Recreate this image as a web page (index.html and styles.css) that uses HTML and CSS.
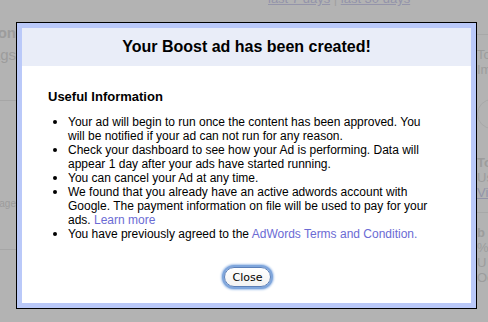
FILE: index.html
```html
<!DOCTYPE html>
<html lang="en">
<head>
   <meta charset="UTF-8">
   <title>Your Boost ad has been created!</title>
   <link rel="stylesheet" href="styles.css">
</head>
<body>
   <div class="page">
      <div class="page-top">
         <a href="#">last 7 days</a> | <a href="#">last 30 days</a>
      </div>
      <div class="page-cols">
         <div class="page-left">
            <p class="strong">Information</p>
            <p>Tags</p>
            <hr>
            <p class="small">Manage</p>
            <hr>
         </div>
         <div class="page-mid"></div>
         <div class="page-right">
            <hr>
            <p>Total</p>
            <p>Impr</p>
            <div class="ring"></div>
            <p class="strong">Tor</p>
            <p>Users</p>
            <p><a href="#">Views</a></p>
            <hr>
            <p class="strong">b</p>
            <p>%</p>
            <p>U</p>
            <p>Ocean,</p>
         </div>
      </div>
   </div>

   <div class="dialog">
      <div class="dialog-inner">
         <h1>Your Boost ad has been created!</h1>
         <div class="dialog-body">
            <h2>Useful Information</h2>
            <ul>
               <li>Your ad will begin to run once the content has been approved. You will be notified if your ad can not run for any reason.</li>
               <li>Check your dashboard to see how your Ad is performing. Data will appear 1 day after your ads have started running.</li>
               <li>You can cancel your Ad at any time.</li>
               <li>We found that you already have an active adwords account with Google. The payment information on file will be used to pay for your ads. <a href="#">Learn more</a></li>
               <li>You have previously agreed to the <a href="#">AdWords Terms and Condition.</a></li>
            </ul>
            <div class="actions">
               <button>Close</button>
            </div>
         </div>
      </div>
   </div>
</body>
</html>
```

FILE: styles.css
```css
* {
   margin: 0;
   padding: 0;
   box-sizing: border-box;
}
body {
   font-family: "Liberation Sans", Arial, sans-serif;
   background-color: #b3b3b3;
   width: 488px;
   height: 322px;
   overflow: hidden;
}
/* faded page behind the overlay */
.page {
   height: 322px;
   overflow: hidden;
   color: #9c9c9c;
   font-size: 13px;
}
.page a {
   color: #9393a8;
}
.page-top {
   height: 6px;
   padding-left: 268px;
   line-height: 13px;
   margin-top: -8px;
   color: #a0a0a0;
}
.page-top a {
   color: #9494aa;
}
.page-cols {
   display: flex;
   margin-top: 24px;
}
.page-left {
   width: 16px;
   overflow: hidden;
   direction: rtl;
   text-align: right;
}
.page-left p {
   white-space: nowrap;
   line-height: 22px;
   font-size: 15px;
}
.page-left .small {
   font-size: 10px;
   margin: 92px 0 0;
}
.page-left hr {
   border: none;
   border-top: 1px solid #a6a6a6;
   margin-top: 34px;
   width: 40px;
}
.strong {
   font-weight: bold;
}
.page-mid {
   flex: 1;
}
.page-right {
   width: 11px;
   overflow: hidden;
}
.page-right p {
   white-space: nowrap;
   font-size: 13px;
   line-height: 15px;
}
.page-right hr {
   border: none;
   border-top: 1px solid #a8a8a8;
   margin: 12px 0;
}
.ring {
   width: 30px;
   height: 30px;
   border: 1px solid #a8a8a8;
   border-radius: 50%;
   margin: 22px 0 26px 0;
}

/* dialog */
.dialog {
   position: absolute;
   left: 16px;
   top: 22px;
   width: 461px;
   height: 287px;
   border: 1px solid #000;
   padding: 5px;
   background-color: #bac9f9;
}
.dialog-inner {
   background-color: #fff;
   height: 100%;
}
.dialog h1 {
   height: 38px;
   line-height: 38px;
   background-color: #e9edf8;
   text-align: center;
   font-size: 16px;
   font-weight: bold;
   color: #000;
}
.dialog-body {
   padding: 23px 38px 0 26px;
   font-size: 12px;
   color: #000;
}
.dialog h2 {
   font-size: 13px;
   line-height: 16px;
   font-weight: bold;
   margin-bottom: 10px;
}
.dialog ul {
   padding-left: 20px;
   line-height: 14px;
}
.dialog li::marker {
   font-size: 13px;
}
.dialog a {
   color: #6b6bd4;
   text-decoration: none;
}
.actions {
   text-align: center;
   margin-top: 26px;
   padding-left: 14px;
}
.actions button {
   font-family: "DejaVu Sans", "Liberation Sans", sans-serif;
   font-size: 11px;
   height: 20px;
   padding: 0 8px;
   border: 1px solid #5b7fb8;
   border-radius: 10px;
   background: linear-gradient(#ffffff, #f2f2f2);
   box-shadow: 0 0 0 2px #7fa6dc, 0 0 2px 3px #a9c4ea;
   color: #000;
}
```
